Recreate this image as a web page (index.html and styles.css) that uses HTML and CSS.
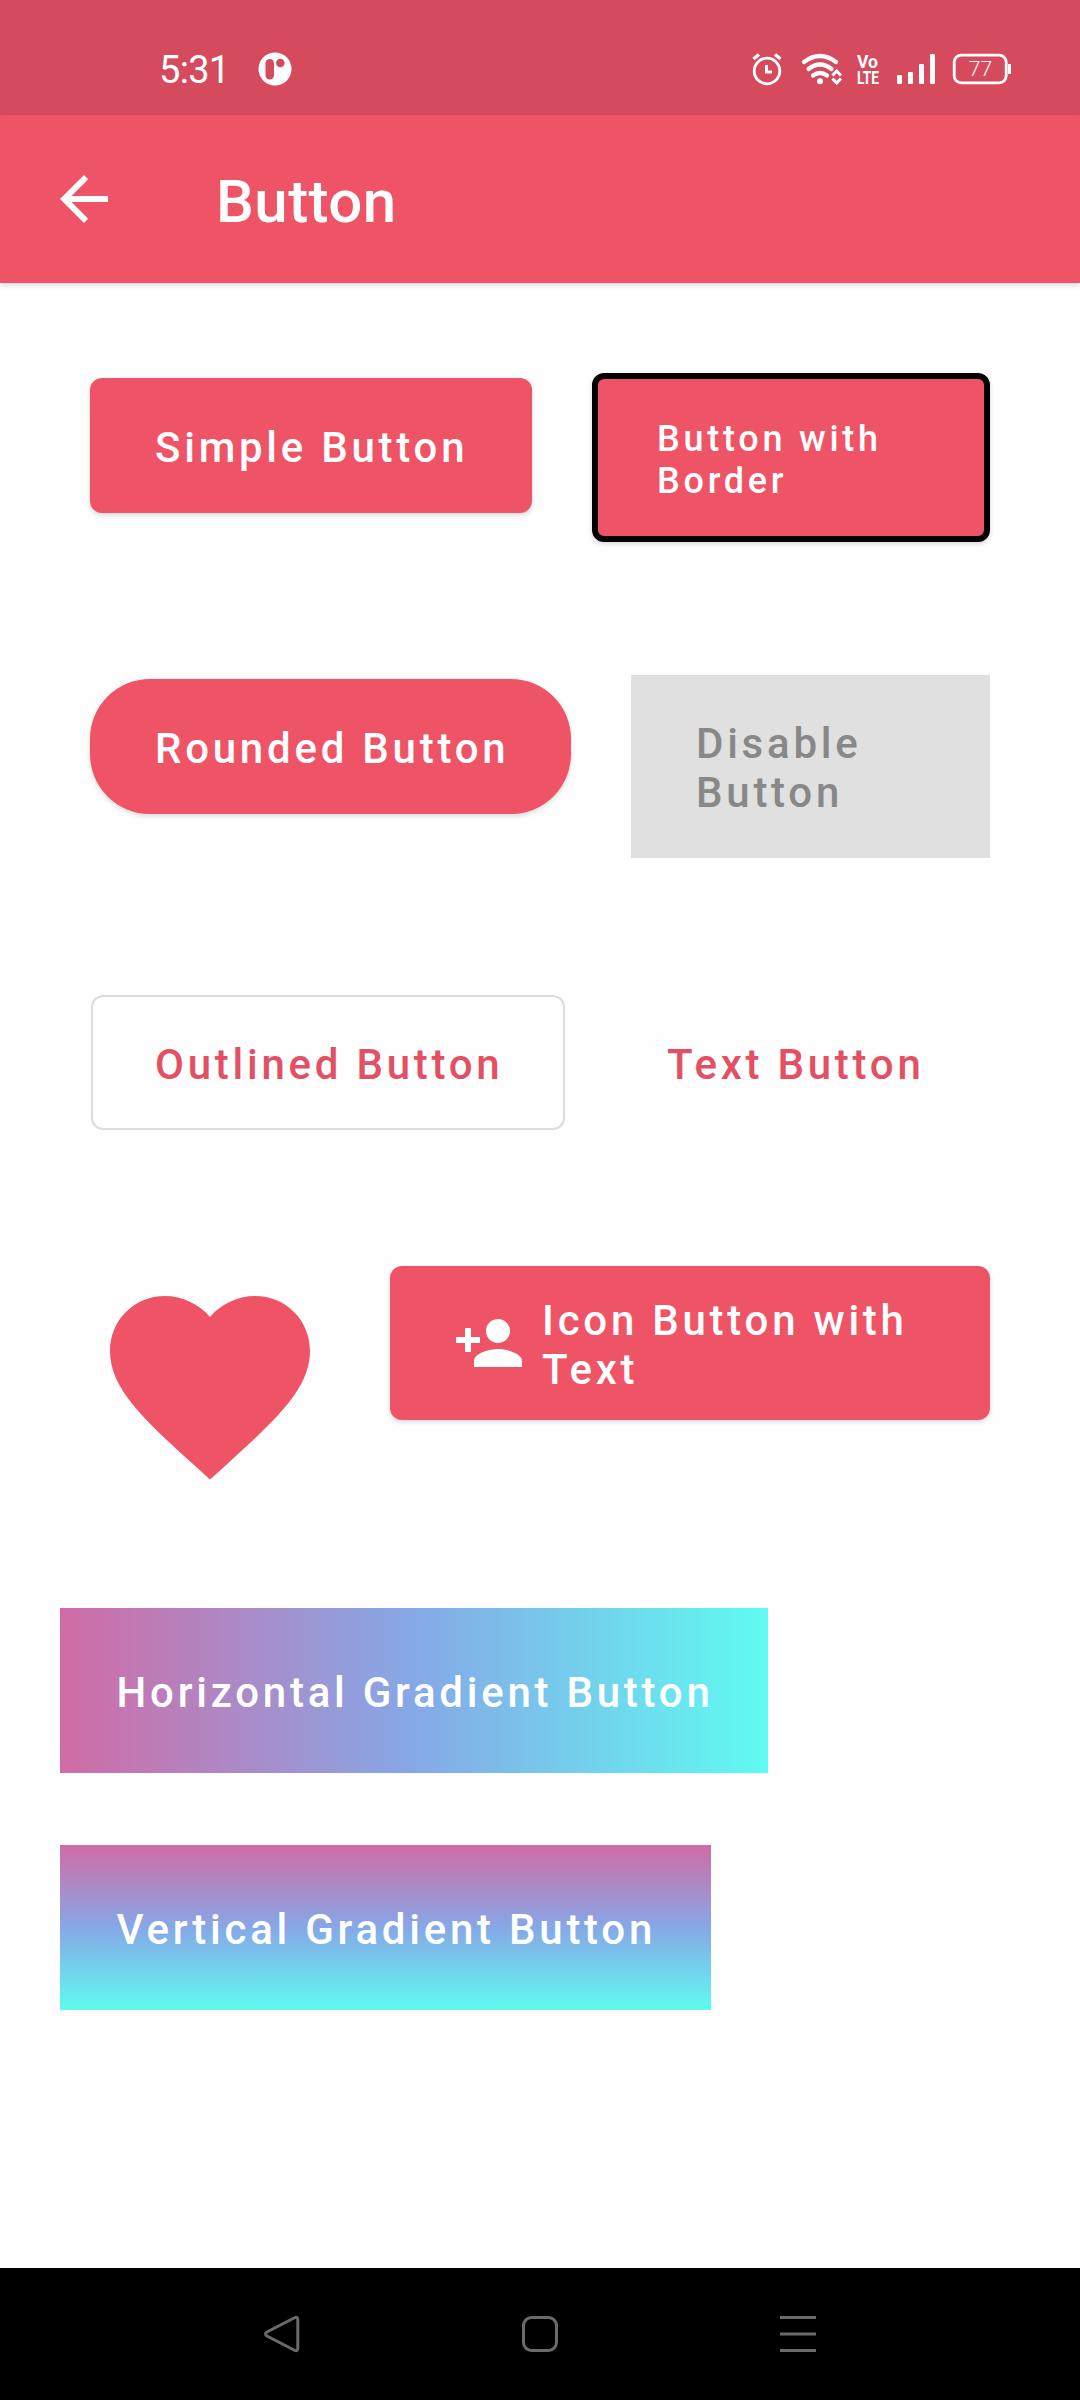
FILE: index.html
```html
<!DOCTYPE html>
<html lang="en">
<head>
<meta charset="utf-8">
<title>Button</title>
<link rel="stylesheet" href="styles.css">
</head>
<body>
<div class="screen">
  <div class="status">
    <span class="clock">5:31</span>
    <svg class="badge" width="34" height="34" viewBox="0 0 34 34"><circle cx="17" cy="17" r="16.5" fill="#fff"/><rect x="7.500" y="7" width="8.500" height="20.500" rx="4.250" fill="#d54b5d"/><circle cx="22.300" cy="11" r="4.300" fill="#d54b5d"/></svg>
    <svg class="tray" width="264" height="36" viewBox="750 51 264 36" fill="none" stroke="#fff">
      <g stroke-width="2.800"><circle cx="767" cy="71" r="12.800"/><path d="M766.500 65v7h5.500" stroke-width="3"/><path d="M753.500 59l5.500-4.500M780.500 59l-5.500-4.500" stroke-width="3.500"/></g>
      <g stroke-width="4.200" stroke-linecap="round"><path d="M804 62q16-12 32 0M808.500 69q11.500-9 23 0M813 75.500q7-5 14 0"/></g>
      <circle cx="820" cy="81.300" r="3" fill="#fff" stroke="none"/>
      <path d="M832.500 75.500l4.200-4.500 4.200 4.500M832.500 78.500l4.200 4.500 4.200-4.500" stroke-width="3"/>
      <g class="volte" fill="#fff" stroke="none"><text x="857" y="67.500" textLength="21" lengthAdjust="spacingAndGlyphs">Vo</text><text x="857" y="84" textLength="22" lengthAdjust="spacingAndGlyphs">LTE</text></g>
      <g fill="#fff" stroke="none"><rect x="897" y="75" width="5" height="9" rx="1"/><rect x="908" y="72" width="5" height="12" rx="1"/><rect x="919" y="64" width="5" height="20" rx="1"/><rect x="930" y="54" width="5" height="30" rx="1"/></g>
      <rect x="954.200" y="55.200" width="52" height="27.600" rx="7" stroke-width="2.800"/>
      <rect x="1008" y="64" width="3" height="10" fill="#fff" stroke="none"/>
      <text class="percent" x="980.500" y="76" text-anchor="middle" fill="#fff" stroke="none">77</text>
    </svg>
  </div>
  <header class="appbar">
    <svg width="72" height="72" viewBox="0 0 24 24" fill="#fff"><path d="M20 11H7.830l5.590-5.590L12 4l-8 8 8 8 1.410-1.410L7.830 13H20v-2z"/></svg>
    <h1 class="title">Button</h1>
  </header>
  <main class="content">
    <div class="row row-first">
      <button class="btn raised simple">Simple Button</button>
      <button class="btn raised bordered">Button with<br>Border</button>
    </div>
    <div class="row row-second">
      <button class="btn raised rounded">Rounded Button</button>
      <button class="btn disabled">Disable<br>Button</button>
    </div>
    <div class="row row-third">
      <button class="btn outlined">Outlined Button</button>
      <button class="btn flat">Text Button</button>
    </div>
    <div class="row row-icons">
      <svg class="heart" width="240" height="240" viewBox="0 0 24 24"><path d="M12 21.350l-1.450-1.320C5.400 15.360 2 12.280 2 8.500 2 5.420 4.420 3 7.500 3c1.740 0 3.410.81 4.500 2.090C13.090 3.810 14.760 3 16.500 3 19.580 3 22 5.420 22 8.500c0 3.780-3.400 6.860-8.550 11.540L12 21.350z"/></svg>
      <button class="btn raised with-icon">
        <svg class="person" width="72" height="72" viewBox="0 0 24 24"><path d="M15 12c2.210 0 4-1.790 4-4s-1.790-4-4-4-4 1.790-4 4 1.790 4 4 4zm-9-2V7H4v3H1v2h3v3h2v-3h3v-2H6zm9 4c-2.670 0-8 1.340-8 4v2h16v-2c0-2.660-5.330-4-8-4z"/></svg>
        <span>Icon Button with<br>Text</span>
      </button>
    </div>
    <div class="gradients">
      <button class="btn gradient horizontal">Horizontal Gradient Button</button>
      <button class="btn gradient vertical">Vertical Gradient Button</button>
    </div>
  </main>
  <nav class="navbar">
    <svg width="40" height="48" viewBox="0 0 40 48"><path d="M32.500 7.800Q35.800 6 35.800 10v28q0 4-3.300 2.200L5 26q-3-2 0-4z"/></svg>
    <svg width="40" height="48" viewBox="0 0 40 48"><rect x="3.500" y="7.500" width="33" height="33" rx="8"/></svg>
    <svg width="40" height="48" viewBox="0 0 40 48"><path d="M2 7.500h36M2 24h36M2 40.500h36"/></svg>
  </nav>
</div>
</body>
</html>
```
FILE: styles.css
```css
* { box-sizing: border-box; }
body { margin: 0; font-family: Roboto, sans-serif; }
.screen { width: 1080px; height: 2400px; display: flex; flex-direction: column; background: #fefefe; }
svg { display: block; flex: none; }
.status { height: 115px; flex: none; display: flex; align-items: flex-start; padding: 51px 66px 0 159px; background: #d54b5d; color: #fff; }
.clock { width: 99px; font-size: 38px; line-height: 38px; letter-spacing: -.7px; }
.badge { margin-top: 1px; }
.tray { margin-left: auto; overflow: visible; }
.volte { font-size: 18.500px; font-weight: 700; }
.percent { font-size: 21px; font-weight: 300; }
.appbar { height: 168px; flex: none; display: flex; align-items: flex-start; gap: 96px; padding: 48px 48px 0; background: #ef5366; color: #fff; box-shadow: 0 2px 5px rgba(0, 0, 0, .16); }
.title { margin: 4px 0 0; font-size: 60px; line-height: 70px; font-weight: 500; letter-spacing: .45px; }
.content { flex: 1; padding: 90px 90px 0; }
.row { display: flex; justify-content: space-between; align-items: flex-start; }
.row-first { height: 301px; }
.row-second { height: 321px; }
.row-third { height: 271px; }
.row-icons { height: 342px; }
.btn { flex: none; margin: 0; border: 0; border-radius: 12px; height: 135px; padding: 45px 0 0 65px; font: 500 42px/49px Roboto, sans-serif; letter-spacing: 3.75px; text-align: left; white-space: nowrap; display: flex; align-items: flex-start; background: #ef5366; color: #fff; }
.raised { box-shadow: 0 2px 5px rgba(0, 0, 0, .15); }
.simple { width: 442px; margin-top: 5px; }
.bordered { width: 398px; height: 169px; padding: 39px 0 0 59px; border: 6px solid #000; font-size: 36px; line-height: 42px; }
.rounded { width: 481px; margin-top: 5px; border-radius: 60px; }
.disabled { width: 359px; height: 183px; margin-top: 1px; padding: 44px 0 0 65px; border-radius: 0; background: #e0e0e0; color: #888; }
.outlined { width: 474px; margin-left: 1px; padding: 43px 0 0 62px; border: 2px solid #dcdcdc; background: none; color: #e34f63; }
.flat { width: 387px; padding-left: 64px; background: none; color: #e34f63; }
.heart { fill: #ef5366; }
.with-icon { width: 600px; height: 154px; padding: 30px 0 0 63px; gap: 17px; }
.person { margin-top: 11px; fill: #fff; }
.gradients { display: flex; flex-direction: column; align-items: flex-start; gap: 72px; margin-left: -30px; }
.gradient { height: 165px; border-radius: 0; padding: 60px 0 0 56.500px; }
.horizontal { width: 708px; background: linear-gradient(90deg, #d16ba5, #86a8e7, #5ffbf1); }
.vertical { width: 651px; background: linear-gradient(180deg, #d16ba5, #86a8e7, #5ffbf1); }
.navbar { height: 132px; flex: none; display: flex; justify-content: center; gap: 218px; padding-top: 42px; background: #000; }
.navbar svg { fill: none; stroke: #6a6a6a; stroke-width: 3px; }
```
